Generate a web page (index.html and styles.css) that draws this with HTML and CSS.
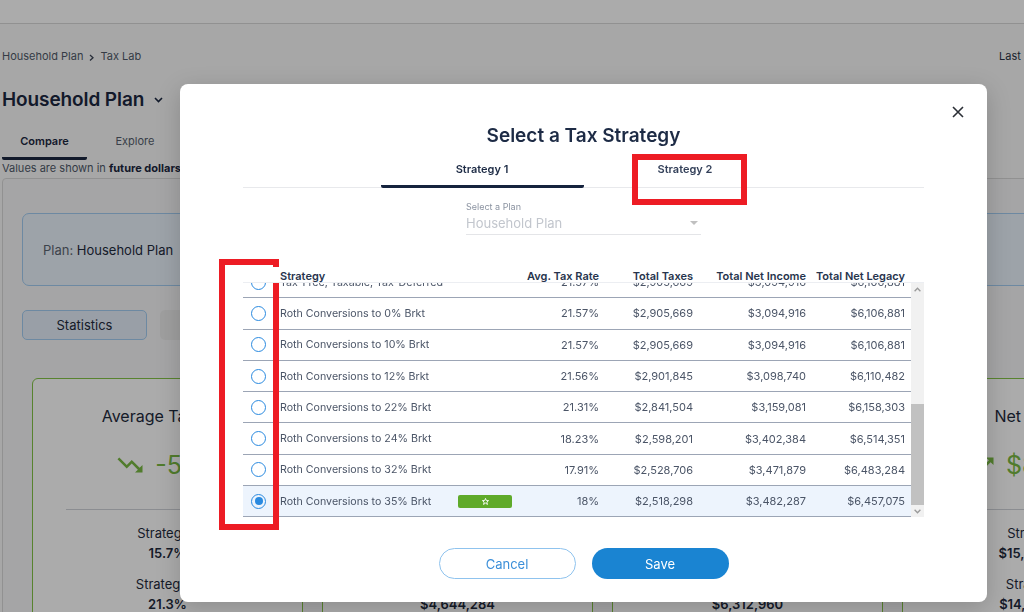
FILE: index.html
```html
<!DOCTYPE html>
<html lang="en">
<head>
<meta charset="utf-8">
<title>Tax Lab</title>
<link rel="stylesheet" href="styles.css">
</head>
<body>
<div class="page">
  <div class="topbar"></div>
  <div class="crumbs">
    <div class="crumbs-left">
      <span>Household Plan</span>
      <svg class="crumb-chev" width="5" height="7" viewBox="0 0 5 7"><path d="M1 1L4 3.8L1 6.5" fill="none" stroke="#3c4556" stroke-width="1.3"/></svg>
      <span>Tax Lab</span>
    </div>
    <div class="last">Last updated: Today</div>
  </div>
  <h1 class="plan-title">Household Plan
    <svg width="9" height="6" viewBox="0 0 9 6"><path d="M1 1L4.5 4.5L8 1" fill="none" stroke="#1b2740" stroke-width="1.6"/></svg>
  </h1>
  <div class="page-tabs">
    <div class="ptab active">Compare</div>
    <div class="ptab">Explore</div>
  </div>
  <div class="note">Values are shown in <b>future dollars.</b></div>
  <div class="panel">
    <div class="plan-card"><span class="muted">Plan:</span>&nbsp;Household Plan</div>
    <div class="btn-row">
      <div class="seg active">Statistics</div>
      <div class="seg">Breakdown</div>
    </div>
    <div class="cards">
      <div class="card">
        <div class="card-title">Average Tax Rate</div>
        <div class="card-value">
          <svg width="30" height="30" viewBox="0 0 24 24"><path d="M16 18l2.29-2.29-4.88-4.88-4 4L2 7.41 3.41 6l6 6 4-4 6.3 6.29L22 12v6z" fill="#79b943"/></svg>
          <span>-5.6%</span>
        </div>
        <div class="card-div"></div>
        <div class="card-lbl">Strategy 1</div>
        <div class="card-num">15.7%</div>
        <div class="card-lbl">Strategy 2</div>
        <div class="card-num">21.3%</div>
      </div>
      <div class="card">
        <div class="card-title">Total Taxes</div>
        <div class="card-value">
          <svg width="30" height="30" viewBox="0 0 24 24"><path d="M16 18l2.29-2.29-4.88-4.88-4 4L2 7.41 3.41 6l6 6 4-4 6.3 6.29L22 12v6z" fill="#79b943"/></svg>
          <span>-$2.1M</span>
        </div>
        <div class="card-div"></div>
        <div class="card-lbl">Strategy 1</div>
        <div class="card-num">$2,518,298</div>
        <div class="card-lbl">Strategy 2</div>
        <div class="card-num">$4,644,284</div>
      </div>
      <div class="card">
        <div class="card-title">Total Net Income</div>
        <div class="card-value">
          <svg width="30" height="30" viewBox="0 0 24 24"><path d="M16 6l2.29 2.29-4.88 4.88-4-4L2 16.59 3.41 18l6-6 4 4 6.3-6.29L22 12V6z" fill="#79b943"/></svg>
          <span>$2.8M</span>
        </div>
        <div class="card-div"></div>
        <div class="card-lbl">Strategy 1</div>
        <div class="card-num">$9,112,587</div>
        <div class="card-lbl">Strategy 2</div>
        <div class="card-num">$6,312,960</div>
      </div>
      <div class="card">
        <div class="card-title">Net Legacy</div>
        <div class="card-value">
          <svg width="30" height="30" viewBox="0 0 24 24"><path d="M16 6l2.29 2.29-4.88 4.88-4-4L2 16.59 3.41 18l6-6 4 4 6.3-6.29L22 12V6z" fill="#79b943"/></svg>
          <span>$841,000</span>
        </div>
        <div class="card-div"></div>
        <div class="card-lbl">Strategy 1</div>
        <div class="card-num">$15,298,075</div>
        <div class="card-lbl">Strategy 2</div>
        <div class="card-num">$14,457,075</div>
      </div>
    </div>
  </div>
</div>

<div class="overlay"></div>

<div class="modal">
  <button class="close" aria-label="Close">
    <svg width="12" height="12" viewBox="0 0 12 12"><path d="M1 1L11 11M11 1L1 11" stroke="#2b2f36" stroke-width="1.6"/></svg>
  </button>
  <h2 class="m-title">Select a Tax Strategy</h2>
  <div class="m-tabs">
    <div class="m-tab active">Strategy 1</div>
    <div class="m-tab">Strategy 2</div>
  </div>
  <div class="select">
    <div class="sel-label">Select a Plan</div>
    <div class="sel-value"><span>Household Plan</span><span class="caret"></span></div>
  </div>
  <div class="tbl">
    <div class="thead">
      <div></div>
      <div>Strategy</div>
      <div class="num">Avg. Tax Rate</div>
      <div class="num">Total Taxes</div>
      <div class="num">Total Net Income</div>
      <div class="num">Total Net Legacy</div>
    </div>
    <div class="tbody-wrap">
      <div class="viewport">
        <div class="rows">
          <div class="row"><div class="rc"><span class="radio"></span></div><div class="sc"><span class="sname">Tax-Free, Taxable, Tax-Deferred</span></div><div class="num">21.57%</div><div class="num">$2,905,669</div><div class="num">$3,094,916</div><div class="num">$6,106,881</div></div>
          <div class="row"><div class="rc"><span class="radio"></span></div><div class="sc"><span class="sname">Roth Conversions to 0% Brkt</span></div><div class="num">21.57%</div><div class="num">$2,905,669</div><div class="num">$3,094,916</div><div class="num">$6,106,881</div></div>
          <div class="row"><div class="rc"><span class="radio"></span></div><div class="sc"><span class="sname">Roth Conversions to 10% Brkt</span></div><div class="num">21.57%</div><div class="num">$2,905,669</div><div class="num">$3,094,916</div><div class="num">$6,106,881</div></div>
          <div class="row"><div class="rc"><span class="radio"></span></div><div class="sc"><span class="sname">Roth Conversions to 12% Brkt</span></div><div class="num">21.56%</div><div class="num">$2,901,845</div><div class="num">$3,098,740</div><div class="num">$6,110,482</div></div>
          <div class="row"><div class="rc"><span class="radio"></span></div><div class="sc"><span class="sname">Roth Conversions to 22% Brkt</span></div><div class="num">21.31%</div><div class="num">$2,841,504</div><div class="num">$3,159,081</div><div class="num">$6,158,303</div></div>
          <div class="row"><div class="rc"><span class="radio"></span></div><div class="sc"><span class="sname">Roth Conversions to 24% Brkt</span></div><div class="num">18.23%</div><div class="num">$2,598,201</div><div class="num">$3,402,384</div><div class="num">$6,514,351</div></div>
          <div class="row"><div class="rc"><span class="radio"></span></div><div class="sc"><span class="sname">Roth Conversions to 32% Brkt</span></div><div class="num">17.91%</div><div class="num">$2,528,706</div><div class="num">$3,471,879</div><div class="num">$6,483,284</div></div>
          <div class="row selected"><div class="rc"><span class="radio on"></span></div><div class="sc"><span class="sname">Roth Conversions to 35% Brkt</span><span class="badge"><svg width="7" height="7" viewBox="0 0 10 10"><polygon points="5,0.6 6.2,3.6 9.4,3.7 6.9,5.8 7.8,9.2 5,7.3 2.2,9.2 3.1,5.8 0.6,3.7 3.8,3.6" fill="none" stroke="#fff" stroke-width="1.3"/></svg></span></div><div class="num">18%</div><div class="num">$2,518,298</div><div class="num">$3,482,287</div><div class="num">$6,457,075</div></div>
        </div>
      </div>
      <div class="sbar">
        <div class="sb-btn"><svg width="7" height="5" viewBox="0 0 7 5"><path d="M0.6 4.3L3.5 1.2L6.4 4.3" fill="none" stroke="#9a9a9a" stroke-width="1.3"/></svg></div>
        <div class="sb-track"><div class="thumb"></div></div>
        <div class="sb-btn"><svg width="7" height="5" viewBox="0 0 7 5"><path d="M0.6 0.7L3.5 3.8L6.4 0.7" fill="none" stroke="#9a9a9a" stroke-width="1.3"/></svg></div>
      </div>
    </div>
  </div>
  <div class="m-actions">
    <button class="btn btn-outline">Cancel</button>
    <button class="btn btn-fill">Save</button>
  </div>
</div>

<div class="annot a1"></div>
<div class="annot a2"></div>
</body>
</html>
```

FILE: styles.css
```css
* { box-sizing: border-box; margin: 0; padding: 0; }
html, body { width: 1024px; height: 612px; overflow: hidden; }
body {
  font-family: Inter, "Noto Sans", "Liberation Sans", sans-serif;
  background: #fafafa;
  color: #1e2a3c;
  position: relative;
}

/* ---------- background page ---------- */
.page { width: 1200px; }
.topbar { height: 24px; background: #fff; border-bottom: 1px solid #d9d9d9; }
.crumbs {
  display: flex; align-items: center;
  margin-top: 25px; height: 14px;
  font-size: 11px; line-height: 14px; color: #4f5968;
}
.crumbs-left { width: 999px; flex-shrink: 0; padding-left: 2px; display: flex; align-items: center; gap: 6px; }
.crumb-chev { margin-top: 3px; }
.last { white-space: nowrap; color: #2a3446; }

.plan-title {
  margin-top: 25px; padding-left: 2px;
  font-size: 19px; line-height: 24px; font-weight: 600; color: #1b2740;
  display: flex; align-items: center; gap: 10px; letter-spacing: -0.1px;
}
.page-tabs { display: flex; margin-top: 14px; padding-left: 2px; }
.ptab {
  font-size: 11px; line-height: 14px; color: #555e6c;
  padding: 8px 0 9px; border-bottom: 3px solid transparent;
  text-align: center; width: 96px;
}
.ptab.active { width: 85px; font-weight: 600; color: #1b2740; border-bottom-color: #1b2740; border-radius: 0 0 2px 2px; }
.note { margin-top: 1px; padding-left: 2px; font-size: 11px; line-height: 14px; color: #4f5968; }
.note b { font-weight: 700; color: #1b2740; }

.panel {
  margin: 3px 0 0 2px; height: 600px;
  border: 1px solid #d9d9d9; border-radius: 4px; background: #f7f7f8;
  padding: 34px 0 0 19px;
}
.plan-card {
  width: 1150px; height: 73px;
  border: 1px solid #a3cdf2; border-radius: 7px; background: #ebf3fc;
  display: flex; align-items: center; padding-left: 20px;
  font-size: 13px; color: #1e2a3c;
}
.muted { color: #5c6572; }
.btn-row { display: flex; gap: 13px; margin-top: 24px; }
.seg {
  width: 125px; height: 30px; border-radius: 5px;
  display: flex; align-items: center; justify-content: center;
  font-size: 13px; color: #777;
  background: #eeeeee;
}
.seg.active { border: 1px solid #a3cdf2; background: #e4eef9; color: #1e2a3c; }
.cards { display: flex; gap: 19px; margin: 38px 0 0 10px; }
.card {
  width: 271px; height: 280px; flex-shrink: 0;
  border: 1.5px solid #83c447; border-radius: 6px; background: #fff;
  padding: 27px 33px 0; text-align: center;
}
.card-title { font-size: 16px; line-height: 20px; color: #1e2a3c; }
.card-value {
  margin-top: 22px; height: 34px; padding-left: 8px;
  display: flex; align-items: center; justify-content: center; gap: 10px;
  font-size: 25px; color: #79b943; white-space: nowrap;
}
.card-div { margin-top: 27px; height: 1px; background: #cfd3d9; }
.card-lbl { margin-top: 15px; font-size: 13px; line-height: 16px; color: #1e2a3c; }
.card-num { margin-top: 4px; font-size: 13px; line-height: 16px; font-weight: 600; color: #1e2a3c; }

/* ---------- overlay + modal ---------- */
.overlay { position: fixed; inset: 0; background: rgba(0, 0, 0, 0.33); }

.modal {
  position: absolute; left: 180px; top: 84px;
  width: 807px; height: 518px;
  background: #fff; border-radius: 8px;
  box-shadow: 0 6px 24px rgba(0, 0, 0, 0.18);
  padding: 40px 63px 0;
}
.close {
  position: absolute; left: 768px; top: 18px;
  width: 20px; height: 20px; border: 0; background: none;
  display: flex; align-items: center; justify-content: center;
}
.m-title {
  text-align: center; font-size: 19px; line-height: 24px; font-weight: 600; color: #1d2b45;
}
.m-tabs {
  margin-top: 8px; display: flex; justify-content: center;
  border-bottom: 1px solid #e8e9ec;
}
.m-tab {
  width: 203px; text-align: center;
  padding: 6px 0 9px; margin-bottom: -1px;
  font-size: 11px; line-height: 14px; font-weight: 600; color: #34415a;
  border-bottom: 3px solid transparent;
}
.m-tab.active { color: #1d2b45; border-bottom-color: #15233d; border-radius: 2px; }

.select { width: 235px; margin: 13px auto 0; }
.sel-label { font-size: 9px; line-height: 12px; color: #8b93a1; }
.sel-value {
  margin-top: 2px; padding-bottom: 3px;
  display: flex; justify-content: space-between; align-items: center;
  font-size: 13px; line-height: 16px; color: #c2c6cd;
  border-bottom: 1px solid #e4e5e8;
}
.caret {
  width: 0; height: 0; margin-right: 3px;
  border-left: 4px solid transparent; border-right: 4px solid transparent;
  border-top: 4px solid #c0c0c0;
}

.tbl { margin-top: 32px; }
.thead, .row {
  display: grid;
  grid-template-columns: 37px 240px 79px 94px 113px 99px;
  align-items: center;
}
.thead {
  height: 16px; padding-top: 3px; padding-right: 20px;
  font-size: 11px; line-height: 12px; font-weight: 600; color: #27344d;
  border-bottom: 1px solid #eceef2;
  position: relative; z-index: 1; background: #fff;
}
.num { text-align: right; }
.tbody-wrap { display: flex; height: 234px; }
.viewport { flex: 1; overflow: hidden; }
.rows { margin-top: -16px; }
.row {
  height: 31.3px; padding-right: 7px;
  border-bottom: 1px solid #9ca5b5;
  font-size: 11px; color: #4b5567;
}
.row.selected { background: #edf4fd; }
.rc { display: flex; align-items: center; }
.radio {
  width: 15px; height: 15px; margin-left: 8px;
  border: 1.5px solid #2a8ae0; border-radius: 50%;
  display: flex; align-items: center; justify-content: center;
}
.radio.on::after { content: ""; width: 8px; height: 8px; border-radius: 50%; background: #2a8ae0; }
.sc { display: flex; align-items: center; }
.sname { width: 178px; flex-shrink: 0; white-space: nowrap; font-size: 10.65px; }
.badge {
  width: 54px; height: 13px; border-radius: 2px; background: #5faa2a;
  display: flex; align-items: center; justify-content: center;
}

.sbar { width: 13px; display: flex; flex-direction: column; background: #f1f1f1; }
.sb-btn { height: 12px; display: flex; align-items: center; justify-content: center; }
.sb-track { flex: 1; }
.thumb { margin-top: 109px; height: 101px; background: #c1c1c1; }

.m-actions { display: flex; justify-content: center; gap: 16px; margin-top: 31px; }
.btn {
  width: 137px; height: 31px; border-radius: 16px;
  font-family: Inter, "Noto Sans", sans-serif; font-size: 13px;
}
.btn-outline { border: 1px solid #8fc3ee; background: #fff; color: #3b8fd9; }
.btn-fill { border: 0; background: #1a84d2; color: #fff; }

/* ---------- red annotation boxes ---------- */
.annot { position: absolute; border: 6px solid #ed1c24; }
.a1 { left: 632px; top: 154px; width: 115px; height: 51px; }
.a2 { left: 219px; top: 259px; width: 60px; height: 271px; }
```
